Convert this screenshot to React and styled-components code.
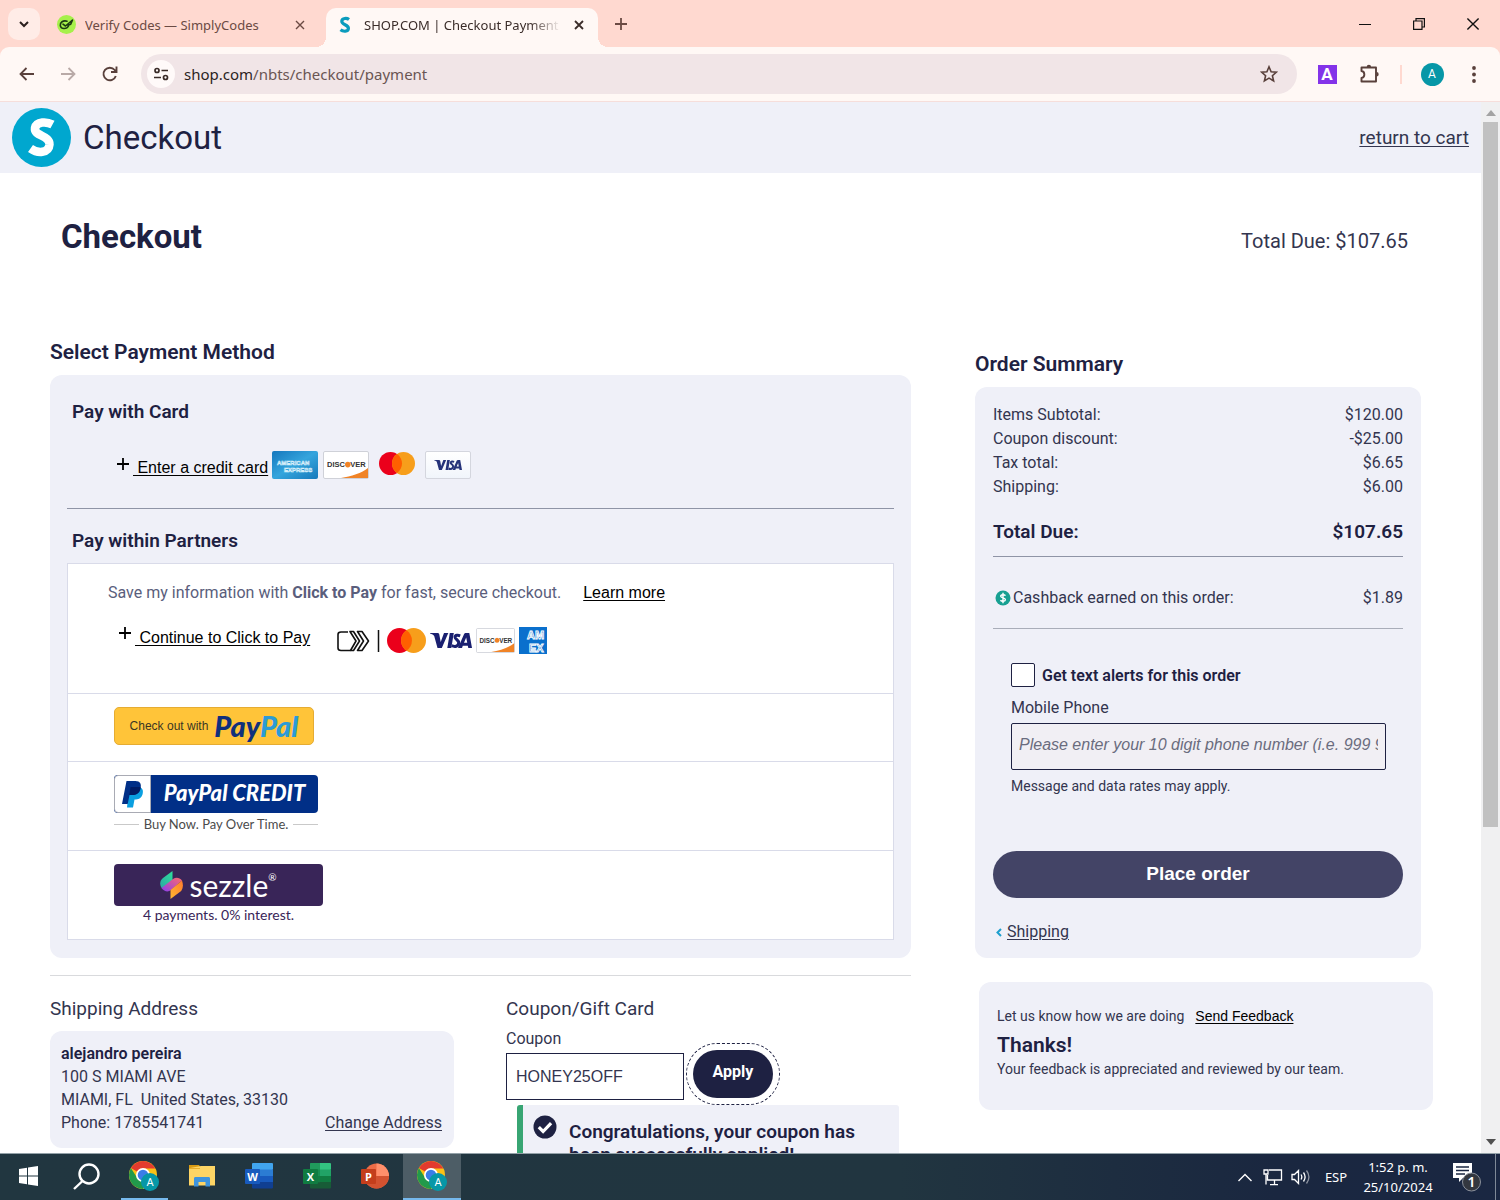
import React from "react";
import styled, { createGlobalStyle, css } from "styled-components";

const ink = "#1e2142";
const body = "#33354f";
const panel = "#eff0f8";
const roboto = `Roboto, "Liberation Sans", sans-serif`;
const arial = `"Liberation Sans", Arial, sans-serif`;
const system = `"Noto Sans", "Open Sans", sans-serif`;

const GlobalStyle = createGlobalStyle`
  *, *::before, *::after { box-sizing: border-box; }
  body { margin: 0; background: #fff; font-family: ${roboto}; color: ${body}; font-size: 16px; }
  h1, h2, h3, p { margin: 0; }
  button, input { font: inherit; color: inherit; }
  button { border: 0; padding: 0; background: none; cursor: pointer; }
  svg { display: block; flex: none; }
`;

const Desktop = styled.div`
  display: flex;
  flex-direction: column;
  height: 100vh;
  overflow: hidden;
`;

/* ---------- browser frame ---------- */

const TabStrip = styled.div`
  display: flex;
  flex: none;
  height: 47px;
  padding-left: 8px;
  background: #ffd9d0;
  font-family: ${system};
`;

const TabSearch = styled.button`
  display: grid;
  place-items: center;
  width: 32px;
  height: 32px;
  margin-top: 8px;
  border-radius: 10px;
  background: #ffece7;
`;

const Tab = styled.div`
  position: relative;
  display: flex;
  align-items: center;
  gap: 9px;
  width: 286px;
  height: 39px;
  margin-top: 8px;
  padding: 0 18px 6px 17px;
  color: #6b4a43;
  ${(p) =>
    p.$active &&
    css`
      gap: 10px;
      width: 272px;
      padding: 0 11px 6px 10px;
      color: #3a2c29;
      background: #fff8f5;
      border-radius: 10px 10px 0 0;
      &::before,
      &::after {
        content: "";
        position: absolute;
        bottom: 0;
        width: 10px;
        height: 10px;
      }
      &::before {
        left: -10px;
        background: radial-gradient(circle at 0 0, transparent 10px, #fff8f5 10px);
      }
      &::after {
        right: -10px;
        background: radial-gradient(circle at 100% 0, transparent 10px, #fff8f5 10px);
      }
    `}
`;

const TabTitle = styled.span`
  flex: 1;
  overflow: hidden;
  white-space: nowrap;
  font-size: 13px;
  ${(p) => p.$fade && "mask-image: linear-gradient(90deg, #000 84%, transparent);"}
`;

const TabClose = styled.button`
  display: grid;
  place-items: center;
  width: 16px;
  height: 16px;
`;

const NewTab = styled.button`
  display: grid;
  place-items: center;
  width: 46px;
  height: 47px;
`;

const WindowButtons = styled.div`
  display: flex;
  margin-left: auto;
`;

const WindowButton = styled.button`
  display: grid;
  place-items: center;
  width: 54px;
  height: 47px;
`;

const ToolbarBack = styled.div`
  flex: none;
  background: #ffd9d0;
`;

const Toolbar = styled.div`
  display: flex;
  align-items: center;
  height: 55px;
  padding: 0 5px;
  background: #fff8f5;
  border-bottom: 1px solid #f6dedb;
  border-radius: 9px 9px 0 0;
`;

const ToolButton = styled.button`
  display: grid;
  place-items: center;
  flex: none;
  width: 42px;
  height: 40px;
`;

const Omnibox = styled.div`
  display: flex;
  align-items: center;
  flex: 1;
  height: 40px;
  margin: 0 9px 0 10px;
  padding: 0 7px 0 6px;
  border-radius: 20px;
  background: #f1e5e7;
`;

const SiteInfo = styled.button`
  display: grid;
  place-items: center;
  width: 28px;
  height: 28px;
  border-radius: 50%;
  background: #fffaf9;
`;

const Address = styled.div`
  flex: 1;
  padding-left: 9px;
  font: 15px ${system};
  color: #6a5553;
  b {
    font-weight: 400;
    color: #2b1f1e;
  }
`;

const Divider = styled.span`
  width: 2px;
  height: 19px;
  margin: 0 9px 0 10px;
  background: #ffd9d0;
`;

const Avatar = styled.span`
  display: grid;
  place-items: center;
  width: 23px;
  height: 23px;
  border-radius: 50%;
  background: #0797a7;
  color: #fff;
  font-size: 12px;
`;

const ExtensionMark = styled.span`
  display: grid;
  place-items: center;
  width: 19px;
  height: 19px;
  background: #8333e9;
  color: #fff;
  font-size: 17px;
  font-weight: 700;
  line-height: 19px;
`;

/* ---------- page ---------- */

const Viewport = styled.div`
  display: flex;
  flex: 1;
  min-height: 0;
`;

const Page = styled.div`
  flex: 1;
  min-width: 0;
  overflow: hidden;
`;

const ScrollTrack = styled.div`
  display: flex;
  flex-direction: column;
  align-items: center;
  flex: none;
  width: 19px;
  padding: 8px 2px 8px;
  background: #f0f0f1;
`;

const ScrollThumb = styled.div`
  flex: 705 1 0;
  width: 100%;
  margin-top: 6px;
  background: #c1c1c1;
`;

const ScrollRest = styled.div`
  flex: 312 1 0;
`;

const SiteHeader = styled.header`
  display: flex;
  align-items: center;
  height: 71px;
  padding: 0 12px;
  gap: 12px;
  background: ${panel};
`;

const SiteTitle = styled.div`
  flex: 1;
  font-size: 33px;
  line-height: 40px;
  color: ${ink};
`;

const Link = styled.a`
  color: ${(p) => (p.$dark ? "#000" : body)};
  font-family: ${(p) => (p.$dark ? arial : roboto)};
  font-size: ${(p) => p.$size || 16}px;
  line-height: 22px;
  text-decoration: underline;
  text-underline-offset: 2px;
  white-space: pre;
`;

const Main = styled.main`
  padding: 44px 60px 0 50px;
`;

const TitleRow = styled.div`
  display: flex;
  align-items: baseline;
  justify-content: space-between;
  padding: 0 13px 0 11px;
  margin-bottom: 83px;
`;

const PageTitle = styled.h1`
  font-size: 33px;
  line-height: 40px;
  font-weight: 700;
  color: ${ink};
`;

const HeadTotal = styled.p`
  font-size: 20px;
  line-height: 24px;
`;

const Columns = styled.div`
  display: grid;
  grid-template-columns: 861fr 446fr;
  gap: 64px;
`;

const Side = styled.aside`
  padding-top: 12px;
`;

const SectionTitle = styled.h2`
  margin-bottom: 11px;
  font-size: 21px;
  line-height: 24px;
  font-weight: 600;
  color: ${ink};
`;

const Card = styled.section`
  padding: 26px 17px 18px;
  border-radius: 12px;
  background: ${panel};
`;

const GroupTitle = styled.h3`
  padding-left: 5px;
  font-size: 19px;
  line-height: 22px;
  font-weight: 600;
  color: ${ink};
`;

const Rule = styled.hr`
  height: 1px;
  margin: ${(p) => p.$margin};
  border: 0;
  background: ${(p) => (p.$light ? "#d9dadd" : "#8f94a6")};
`;

const CardRow = styled.div`
  display: flex;
  align-items: flex-end;
  height: 28px;
  margin-top: 28px;
  padding-left: 50px;
`;

const ClickRow = styled.div`
  display: flex;
  align-items: flex-start;
  margin-top: 23px;
  padding-left: 11px;
`;

const PlusSlot = styled.span`
  align-self: flex-start;
  padding-top: ${(p) => p.$top}px;
  margin-right: 4px;
`;

const Logos = styled.div`
  display: flex;
  align-items: center;
  align-self: center;
  gap: ${(p) => p.$gap}px;
  margin-left: ${(p) => p.$offset}px;
`;

const MastercardSlot = styled.span`
  padding: 0 5px 4px;
`;

const VisaTile = styled.span`
  display: grid;
  place-items: center;
  width: 46px;
  height: 28px;
  border: 1px solid #d4d6de;
  border-radius: 2px;
  background: linear-gradient(#fff, #f1f5fb);
`;

const Partners = styled.div`
  margin-top: 11px;
  border: 1px solid #d9dbe9;
  background: #fff;
`;

const Partner = styled.div`
  height: ${(p) => p.$height}px;
  padding: 13px 46px;
  border-top: 1px solid #d9dbe9;
`;

const ClickToPay = styled.div`
  height: 129px;
  padding: 18px 40px;
`;

const Pitch = styled.p`
  display: flex;
  gap: 22px;
  line-height: 22px;
  color: #5a5e7c;
`;

const PayPalButton = styled.button`
  display: flex;
  align-items: center;
  justify-content: center;
  gap: 6px;
  width: 200px;
  height: 38px;
  border: 1px solid #e5ac33;
  border-radius: 5px;
  background: #ffc439;
  color: #3a3524;
  font: 12px ${arial};
`;

const PayPalWord = styled.span`
  font: italic 900 29px/36px Lato, sans-serif;
  color: #10307c;
  i {
    color: #2b9bd6;
  }
`;

const CreditButton = styled.button`
  display: flex;
  width: 204px;
  height: 38px;
  overflow: hidden;
  border-radius: 4px;
  background: #012f87;
`;

const CreditMark = styled.span`
  display: grid;
  place-items: center;
  width: 37px;
  height: 38px;
  border: 1px solid #a9abb4;
  border-radius: 4px 0 0 4px;
  background: #fff;
`;

const CreditText = styled.span`
  flex: 1;
  font: italic 900 22px/36px Lato, sans-serif;
  color: #fff;
`;

const CreditCaption = styled.p`
  display: flex;
  align-items: center;
  gap: 5px;
  width: 204px;
  font: 13px/22px Lato, sans-serif;
  color: #4b4b4b;
  white-space: nowrap;
  &::before,
  &::after {
    content: "";
    flex: 1;
    height: 1px;
    background: #c9c9c9;
  }
`;

const SezzleButton = styled.button`
  display: flex;
  align-items: center;
  justify-content: center;
  gap: 6px;
  width: 209px;
  height: 42px;
  border-radius: 4px;
  background: #392558;
  color: #fff;
  font: 30px/36px Lato, sans-serif;
  sup {
    align-self: flex-start;
    font-size: 10px;
    line-height: 26px;
    margin-left: -6px;
  }
`;

const SezzleCaption = styled.p`
  width: 209px;
  text-align: center;
  font: 14px/18px Lato, sans-serif;
  color: #392558;
`;

const LowerGrid = styled.div`
  display: grid;
  grid-template-columns: 404fr 405fr;
  gap: 52px;
`;

const LowerTitle = styled.h2`
  font-size: 19px;
  line-height: 24px;
  font-weight: 400;
  color: ${body};
`;

const AddressCard = styled.div`
  display: flex;
  align-items: flex-end;
  justify-content: space-between;
  margin-top: 10px;
  padding: 11px 12px 14px 11px;
  border-radius: 12px;
  background: ${panel};
`;

const AddressLines = styled.address`
  font-style: normal;
  line-height: 23px;
  white-space: pre;
  color: ${body};
  strong {
    font-weight: 600;
    color: ${ink};
  }
`;

const FieldLabel = styled.label`
  display: block;
  margin-top: 6px;
  line-height: 23px;
`;

const CouponRow = styled.div`
  display: flex;
  align-items: flex-start;
  gap: 9px;
`;

const CouponInput = styled.input`
  width: 178px;
  height: 47px;
  margin-top: 3px;
  padding: 0 9px;
  border: 1px solid ${ink};
  background: #fff;
  font: 16px ${arial};
`;

const ApplyButton = styled.button`
  width: 80px;
  height: 48px;
  padding-bottom: 6px;
  border-radius: 24px;
  background: ${ink};
  color: #fff;
  font-size: 16px;
  font-weight: 700;
  outline: 1px dashed ${ink};
  outline-offset: 6px;
`;

const Alert = styled.div`
  display: flex;
  gap: 12px;
  margin: 5px 12px 0 11px;
  padding: 10px 10px 20px;
  border-left: 6px solid #38a573;
  border-radius: 3px;
  background: ${panel};
`;

const AlertText = styled.p`
  padding-top: 5px;
  font-size: 19px;
  line-height: 23px;
  font-weight: 600;
  color: ${ink};
`;

const SummaryCard = styled.section`
  padding: 16px 18px 13px;
  border-radius: 12px;
  background: ${panel};
`;

const Totals = styled.table`
  width: 100%;
  border-collapse: collapse;
  th,
  td {
    padding: 0;
    font-weight: 400;
    line-height: 24px;
    text-align: left;
  }
  td {
    text-align: right;
  }
`;

const GrandTotal = styled.tr`
  th,
  td {
    padding: 21px 0 12px;
    border-bottom: 1px solid #8f94a6;
    font-size: 19px;
    font-weight: 600;
    color: ${ink};
  }
`;

const Cashback = styled.tr`
  th,
  td {
    padding: 29px 0 18px;
    border-bottom: 1px solid #a9adb9;
  }
`;

const CashbackLabel = styled.span`
  display: flex;
  align-items: center;
  gap: 2px;
  padding-left: 2px;
`;

const Alerts = styled.form`
  padding: 34px 17px 0 18px;
`;

const CheckLine = styled.label`
  display: flex;
  align-items: center;
  gap: 7px;
  height: 24px;
  font-weight: 600;
  color: ${ink};
`;

const CheckBox = styled.input`
  appearance: none;
  width: 24px;
  height: 24px;
  margin: 0;
  border: 1px solid ${ink};
  border-radius: 2px;
  background: #fff;
`;

const PhoneLabel = styled.label`
  display: block;
  margin: 9px 0 3px;
  line-height: 24px;
`;

const PhoneInput = styled.input`
  width: 100%;
  height: 47px;
  padding: 0 7px 3px;
  border: 1px solid ${ink};
  border-radius: 2px;
  background: #f1eff4;
  font: 16px ${arial};
  &::placeholder {
    font-style: italic;
    color: #6a6c7e;
    opacity: 1;
  }
`;

const SmallText = styled.p`
  font-size: 14px;
  line-height: 20px;
`;

const MessageNote = styled(SmallText)`
  margin-top: 6px;
`;

const PlaceOrder = styled.button`
  display: block;
  width: 100%;
  height: 47px;
  margin: 55px 0 23px;
  padding-bottom: 2px;
  border-radius: 24px;
  background: #434466;
  color: #fff;
  font: 700 19px ${arial};
`;

const BackLine = styled.div`
  display: flex;
  align-items: center;
  gap: 5px;
  padding: 0 2px 2px;
`;

const Feedback = styled.section`
  height: 128px;
  margin: 24px -12px 0 4px;
  padding: 23px 18px;
  border-radius: 12px;
  background: ${panel};
`;

const FeedbackLine = styled.div`
  display: flex;
  gap: 11px;
  align-items: center;
`;

const Thanks = styled.h2`
  margin: 6px 0 2px;
  font-size: 21px;
  line-height: 24px;
  font-weight: 600;
  color: ${ink};
`;

/* ---------- taskbar ---------- */

const Taskbar = styled.footer`
  display: flex;
  align-items: stretch;
  justify-content: space-between;
  flex: none;
  height: 47px;
  border-top: 1px solid #93a1a8;
  background: linear-gradient(90deg, #213640 0%, #213540 60%, #1a2740 85%, #1a2742 100%);
  color: #fff;
  font-family: ${system};
`;

const Apps = styled.div`
  display: grid;
  grid-template-columns: repeat(8, 1fr);
  width: 461px;
`;

const AppButton = styled.button`
  display: grid;
  place-items: center;
  padding-bottom: 2px;
  ${(p) =>
    p.$current &&
    css`
      padding-bottom: 0;
      background: #4d5d66;
      border-bottom: 2px solid #76b9ed;
    `}
  ${(p) =>
    p.$open &&
    css`
      background: linear-gradient(#76b9ed, #76b9ed) center bottom / 47px 2px no-repeat;
    `}
`;

const Tray = styled.div`
  display: flex;
  align-items: center;
`;

const TrayButton = styled.button`
  display: grid;
  place-items: center;
  width: ${(p) => p.$width}px;
  height: 46px;
  color: #fff;
  font-size: 13px;
  line-height: 20px;
  text-align: center;
`;

const ShowDesktop = styled.button`
  width: 5px;
  height: 46px;
  border-left: 1px solid #7f8997;
`;

/* ---------- drawings ---------- */

const Cross = ({ size = 10, color = "#3a2c29", width = 1.8 }) => (
  <svg width={size} height={size} viewBox="0 0 10 10" stroke={color} strokeWidth={width}>
    <path d="M1 1l8 8M9 1L1 9" />
  </svg>
);

const Plus = ({ size = 12, color = "#000", width = 1.8 }) => (
  <svg width={size} height={size} viewBox="0 0 12 12" stroke={color} strokeWidth={width}>
    <path d="M6 0v12M0 6h12" />
  </svg>
);

const ShopLogo = () => (
  <svg width="59" height="59" viewBox="0 0 59 59">
    <circle cx="29.500" cy="29.500" r="29.500" fill="#00a7cf" />
    <path
      d="M40.500 16.500C35 13.500 24.500 13 23 20C21.800 28.500 38 27 37.500 36.500C36.800 45.500 25.500 45.500 18.500 40.500"
      fill="none"
      stroke="#fff"
      strokeWidth="8.500"
    />
  </svg>
);

const ShopFavicon = () => (
  <svg width="18" height="18" viewBox="0 0 18 18">
    <path d="M13 3.500C11 2 6 1.800 5.800 5.200C5.600 9 12.400 8.500 12.400 12.300C12.400 16 7 15.800 4.500 13.800" fill="none" stroke="#0b9cbd" strokeWidth="3.200" />
  </svg>
);

const SimplyFavicon = () => (
  <svg width="19" height="19" viewBox="0 0 19 19">
    <circle cx="9.500" cy="9.500" r="9.500" fill="#a6f04a" />
    <g fill="none" stroke="#1d3b12" strokeWidth="1.600" strokeLinecap="round" strokeLinejoin="round">
      <path d="M10 6.200C6 5 3 7.500 3.300 10.500c.4 3.800 6.500 4 8.200.5" />
      <path d="M6 9.200l2.500 1.800L15.500 5l-1.800 4.200-2.700 1" />
    </g>
  </svg>
);

const AmexCard = () => (
  <svg width="46" height="28" viewBox="0 0 46 28" role="img" aria-label="American Express">
    <defs>
      <linearGradient id="amexBlue" x1="0" y1="0" x2="1" y2="1">
        <stop offset="0" stopColor="#1577bd" />
        <stop offset=".5" stopColor="#35a5dd" />
        <stop offset="1" stopColor="#1679bb" />
      </linearGradient>
    </defs>
    <rect width="46" height="28" rx="2" fill="url(#amexBlue)" />
    <g fill="#2d8fce" stroke="#d6effa" strokeWidth=".6" fontFamily="Liberation Sans" fontWeight="700" fontSize="6">
      <text x="5" y="13.500">AMERICAN</text>
      <text x="12" y="20.500">EXPRESS</text>
    </g>
  </svg>
);

const DiscoverCard = ({ width = 46, height = 28 }) => (
  <svg width={width} height={height} viewBox="0 0 46 28" preserveAspectRatio="none" role="img" aria-label="Discover">
    <rect x=".5" y=".5" width="45" height="27" rx="1.500" fill="#fff" stroke="#cfd1d8" />
    <path d="M18 27C28 25.500 39 22 45 17v10z" fill="#f08326" />
    <g fontFamily="Liberation Sans" fontWeight="700" fontSize="7.500" fill="#333">
      <text x="4" y="16.300">DISC</text>
      <text x="27.300" y="16.300">VER</text>
    </g>
    <circle cx="24.800" cy="13.600" r="2.800" fill="#f08326" />
  </svg>
);

const Mastercard = ({ width = 36, height = 23 }) => (
  <svg width={width} height={height} viewBox="0 0 36 23" preserveAspectRatio="none" role="img" aria-label="Mastercard">
    <circle cx="11.500" cy="11.500" r="11.500" fill="#eb001b" />
    <circle cx="24.500" cy="11.500" r="11.500" fill="#f79e1b" />
    <path d="M18 2a11.500 11.500 0 0 1 0 19a11.500 11.500 0 0 1 0-19z" fill="#ff5f00" />
  </svg>
);

const VisaWord = ({ width, height, color }) => (
  <svg width={width} height={height} viewBox="0 0 42 17" role="img" aria-label="Visa">
    <g fill={color}>
      <path d="M0 1h7.500c1 0 1.600.5 1.800 1.500L10.700 10 14 1h4.300l-6.500 15H7.500L4.200 4C3.600 2.800 2 2 0 1.500z" />
      <path d="M19.800 1h4l-2.500 15h-4z" />
      <path d="M36 1h3.300L42 16h-3.700l-.5-2.300h-5L32 16h-4L34 2.200C34.400 1.300 35 1 36 1zm.2 4.500L34 10.800h3.200z" />
    </g>
    <path d="M30.800 3.300c-2-.8-5-.9-5.200 1.300-.1 2.300 4 2.700 3.700 5.900-.3 3.600-4 4-7 2.700" transform="translate(-.6 .5)" fill="none" stroke={color} strokeWidth="3" />
  </svg>
);

const ClickIcon = () => (
  <svg width="33" height="22" viewBox="0 0 33 22" fill="none" stroke="#111" strokeWidth="1.600" strokeLinejoin="round">
    <path d="M11 2H4C2.500 2 1 3 1 4.500v13.500c0 1.500 1.500 2.500 3 2.500h9.500" />
    <path d="M13 1.500h3.500l6 9.500-6 9.500h-3l5.500-9.500z" />
    <path d="M20.500 1.500H25L31.500 11 25 20.500h-4.500l6-9.500z" />
  </svg>
);

const AmexSquare = () => (
  <svg width="28" height="27" viewBox="0 0 28 27" role="img" aria-label="Amex">
    <rect width="28" height="27" fill="#0a70cd" />
    <g fill="#0a70cd" stroke="#fff" strokeWidth=".9" fontFamily="Liberation Sans" fontWeight="700" fontSize="11">
      <text x="8" y="12">AM</text>
      <text x="10" y="25">EX</text>
    </g>
  </svg>
);

const PayPalMark = () => (
  <svg width="22" height="27" viewBox="0 0 22 27">
    <path d="M7 6h10c4 1 4.500 4 3.500 7.500-1.300 4-4 5-8 5l-1.500 8H5z" fill="#0a9fe0" />
    <path d="M4.500 0h8.800c5 0 6.300 3 5.300 7.500-1 4.800-4 6.500-8.800 6.500H7.500L5.700 23H0z" fill="#012f87" />
    <path d="M8.500 6h10c-.3 5.500-3.600 8-8.700 8H7.400z" fill="#011c64" />
  </svg>
);

const SezzleMark = () => (
  <svg width="23" height="28" viewBox="0 0 23 28">
    <defs>
      <linearGradient id="sezzleGreen" x1="1" y1="0" x2="0" y2="1">
        <stop offset="0" stopColor="#2fe09b" />
        <stop offset="1" stopColor="#2aa7a4" />
      </linearGradient>
      <linearGradient id="sezzlePink" x1="0" y1="1" x2="1" y2="0">
        <stop offset="0" stopColor="#8a3df0" />
        <stop offset="1" stopColor="#ff6a6a" />
      </linearGradient>
      <linearGradient id="sezzleGold" x1="0" y1="1" x2="1" y2="0">
        <stop offset="0" stopColor="#ffb930" />
        <stop offset="1" stopColor="#ff7a2e" />
      </linearGradient>
    </defs>
    <path d="M12.500 0v9L2 17.500C-.8 14 -.3 9.500 3 7z" fill="url(#sezzleGreen)" />
    <path d="M1.500 17L13 8c3-2 6.500-1.500 9 1.500L11 19c-3 2.500-6.800 1.500-9.500-2z" fill="url(#sezzlePink)" />
    <path d="M10.500 28v-9L22 9.500c1.500 4 1.200 8.500-1.500 11z" fill="url(#sezzleGold)" />
  </svg>
);

const Chrome = () => (
  <svg width="32" height="32" viewBox="0 0 32 32">
    <circle cx="15" cy="15" r="14" fill="#fbc116" />
    <path d="M15 15L2.880 8a14 14 0 0 1 24.240 0L27 8.500H15z" fill="#e33b2e" />
    <path d="M15 29A14 14 0 0 1 2.880 8L9.400 18.300 15 21.500h4z" fill="#229a4b" />
    <circle cx="15" cy="15" r="7" fill="#fff" />
    <circle cx="15" cy="15" r="5.300" fill="#3b7de8" />
    <circle cx="22" cy="22" r="9" fill="#0797a7" />
    <text x="22" y="26" textAnchor="middle" fontFamily="Roboto" fontSize="11" fill="#fff">A</text>
  </svg>
);

const Folder = () => (
  <svg width="26" height="22" viewBox="0 0 26 22">
    <path d="M0 0h10l2 3H0z" fill="#d89b14" />
    <path d="M1 3l11-2h14v19.500H0V3z" fill="#fdd565" />
    <path d="M0 3h11v1H0z" fill="#e9ae2b" />
    <path d="M5 21.500V13.500c0-1 .6-1.500 1.500-1.500h13c1 0 1.500.6 1.500 1.500v8h-4.500V17h-7v4.500z" fill="#3e94dd" />
  </svg>
);

const OfficeApp = ({ letter, tones, round }) => (
  <svg width="28" height="26" viewBox="0 0 28 26">
    {round ? (
      <g>
        <circle cx="15.500" cy="13" r="12.500" fill={tones[0]} />
        <path d="M15.500 .5A12.500 12.500 0 0 1 28 13H15.500z" fill={tones[1]} />
        <path d="M3 13h25a12.500 12.500 0 0 1-25 0z" fill={tones[2]} />
      </g>
    ) : (
      <g>
        <rect x="7" y="0" width="21" height="7" rx="1" fill={tones[0]} />
        <rect x="7" y="6.500" width="21" height="6.500" fill={tones[1]} />
        <rect x="7" y="13" width="21" height="6.500" fill={tones[2]} />
        <rect x="7" y="19" width="21" height="6.500" rx="1" fill={tones[3]} />
        {letter === "X" && <path d="M7 0h10v19.500H7z" fill="#148044" opacity=".6" />}
      </g>
    )}
    <rect x="0" y="6" width="15" height="15" rx="1" fill={tones[4]} />
    <text x="7.500" y="17.500" textAnchor="middle" fontFamily="Open Sans" fontWeight="700" fontSize="11" fill="#fff">{letter}</text>
  </svg>
);

/* ---------- content ---------- */

const charges = [
  ["Items Subtotal:", "$120.00"],
  ["Coupon discount:", "-$25.00"],
  ["Tax total:", "$6.65"],
  ["Shipping:", "$6.00"],
];

function BrowserFrame() {
  return (
    <>
      <TabStrip>
        <TabSearch aria-label="Search tabs">
          <svg width="10" height="7" viewBox="0 0 10 7" fill="none" stroke="#2b1f1e" strokeWidth="2"><path d="M1 1l4 4 4-4" /></svg>
        </TabSearch>
        <Tab>
          <SimplyFavicon />
          <TabTitle>Verify Codes — SimplyCodes</TabTitle>
          <TabClose aria-label="Close tab"><Cross color="#6b4a43" width={1.4} /></TabClose>
        </Tab>
        <Tab $active>
          <ShopFavicon />
          <TabTitle $fade>SHOP.COM | Checkout Payment</TabTitle>
          <TabClose aria-label="Close tab"><Cross /></TabClose>
        </Tab>
        <NewTab aria-label="New tab"><Plus color="#6b4a43" /></NewTab>
        <WindowButtons>
          <WindowButton aria-label="Minimize"><svg width="12" height="12" stroke="#111"><path d="M0 6.500h12" /></svg></WindowButton>
          <WindowButton aria-label="Restore">
            <svg width="12" height="12" viewBox="0 0 12 12" fill="none" stroke="#111" strokeWidth="1.200"><path d="M.6 3h8.400v8.400H.6zM3 3V.6h8.400V9H9" /></svg>
          </WindowButton>
          <WindowButton aria-label="Close"><Cross size={14} color="#111" width={1} /></WindowButton>
        </WindowButtons>
      </TabStrip>
      <ToolbarBack>
        <Toolbar>
          <ToolButton aria-label="Back">
            <svg width="15" height="14" viewBox="0 0 15 14" fill="none" stroke="#59403b" strokeWidth="1.800"><path d="M15 7H1.500M7.500 1l-6 6 6 6" /></svg>
          </ToolButton>
          <ToolButton aria-label="Forward">
            <svg width="15" height="14" viewBox="0 0 15 14" fill="none" stroke="#b9aaa7" strokeWidth="1.800"><path d="M0 7h13.500M7.500 1l6 6-6 6" /></svg>
          </ToolButton>
          <ToolButton aria-label="Reload">
            <svg width="16" height="16" viewBox="0 0 16 16" fill="none" stroke="#59403b" strokeWidth="1.900"><path d="M13.800 10A6.300 6.300 0 1 1 12.700 4L14 6M14.500 .5V6H9" /></svg>
          </ToolButton>
          <Omnibox>
            <SiteInfo aria-label="Site information">
              <svg width="15" height="14" viewBox="0 0 15 14" fill="none" stroke="#3a2c29" strokeWidth="1.700"><circle cx="3" cy="3.500" r="2" /><path d="M7.500 3.500H14M0 10.500h7" /><circle cx="11.500" cy="10.500" r="2" /></svg>
            </SiteInfo>
            <Address><b>shop.com</b>/nbts/checkout/payment</Address>
            <ToolButton aria-label="Bookmark this tab">
              <svg width="18" height="18" viewBox="0 0 18 18" fill="none" stroke="#59403b" strokeWidth="1.600"><path d="M9 1.800l2.100 4.900 5.300.5-4 3.500 1.200 5.200L9 13.100l-4.600 2.800 1.200-5.200-4-3.500 5.300-.5z" /></svg>
            </ToolButton>
          </Omnibox>
          <ToolButton aria-label="Extension"><ExtensionMark>A</ExtensionMark></ToolButton>
          <ToolButton aria-label="Extensions">
            <svg width="20" height="20" viewBox="0 0 20 20" fill="none" stroke="#59403b" strokeWidth="1.900" strokeLinejoin="round">
              <path d="M2.500 3.500H17v14H2.500V14c3.800-.5 3.800-6.500 0-7z" /><path d="M7.700 3a2.200 2.200 0 0 1 4.400 0zM17.500 8a2.200 2.200 0 0 1 0 4.400z" fill="#59403b" stroke="none" />
            </svg>
          </ToolButton>
          <Divider />
          <ToolButton aria-label="Profile"><Avatar>A</Avatar></ToolButton>
          <ToolButton aria-label="Menu">
            <svg width="4" height="17" viewBox="0 0 4 17" fill="#59403b"><circle cx="2" cy="2" r="1.900" /><circle cx="2" cy="8.500" r="1.900" /><circle cx="2" cy="15" r="1.900" /></svg>
          </ToolButton>
        </Toolbar>
      </ToolbarBack>
    </>
  );
}

function PaymentMethods() {
  return (
    <>
      <SectionTitle>Select Payment Method</SectionTitle>
      <Card>
        <GroupTitle>Pay with Card</GroupTitle>
        <CardRow>
          <PlusSlot $top={7}><Plus /></PlusSlot>
          <Link href="#card" $dark>{" Enter a credit card"}</Link>
          <Logos $gap={5} $offset={4}>
            <AmexCard />
            <DiscoverCard />
            <MastercardSlot><Mastercard /></MastercardSlot>
            <VisaTile><VisaWord width={28} height={12} color="#26337a" /></VisaTile>
          </Logos>
        </CardRow>
        <Rule $margin="29px 0 21px" />
        <GroupTitle>Pay within Partners</GroupTitle>
        <Partners>
          <ClickToPay>
            <Pitch>
              <span>Save my information with <strong>Click to Pay</strong> for fast, secure checkout.</span>
              <Link href="#learn" $dark>Learn more</Link>
            </Pitch>
            <ClickRow>
              <PlusSlot $top={0}><Plus /></PlusSlot>
              <Link href="#click-to-pay" $dark>{" Continue to Click to Pay"}</Link>
              <Logos $gap={4} $offset={27}>
                <ClickIcon />
                <svg width="9" height="22"><path d="M4.500 0v22" stroke="#111" strokeWidth="1.500" /></svg>
                <Mastercard width={39} height={25} />
                <VisaWord width={42} height={17} color="#1a2070" />
                <DiscoverCard width={39} height={25} />
                <AmexSquare />
              </Logos>
            </ClickRow>
          </ClickToPay>
          <Partner $height={68}>
            <PayPalButton>
              Check out with
              <PayPalWord>Pay<i>Pal</i></PayPalWord>
            </PayPalButton>
          </Partner>
          <Partner $height={89}>
            <CreditButton>
              <CreditMark><PayPalMark /></CreditMark>
              <CreditText>PayPal CREDIT</CreditText>
            </CreditButton>
            <CreditCaption>Buy Now. Pay Over Time.</CreditCaption>
          </Partner>
          <Partner $height={89}>
            <SezzleButton><SezzleMark />sezzle<sup>®</sup></SezzleButton>
            <SezzleCaption>4 payments. 0% interest.</SezzleCaption>
          </Partner>
        </Partners>
      </Card>
    </>
  );
}

function Lower() {
  return (
    <>
      <Rule $light $margin="17px 0 21px" />
      <LowerGrid>
        <section>
          <LowerTitle>Shipping Address</LowerTitle>
          <AddressCard>
            <AddressLines>
              <strong>alejandro pereira</strong>
              {"\n100 S MIAMI AVE\nMIAMI, FL  United States, 33130\nPhone: 1785541741"}
            </AddressLines>
            <Link href="#address">Change Address</Link>
          </AddressCard>
        </section>
        <section>
          <LowerTitle>Coupon/Gift Card</LowerTitle>
          <FieldLabel htmlFor="coupon">Coupon</FieldLabel>
          <CouponRow>
            <CouponInput id="coupon" defaultValue="HONEY25OFF" />
            <ApplyButton>Apply</ApplyButton>
          </CouponRow>
          <Alert role="status">
            <svg width="24" height="24" viewBox="0 0 24 24">
              <circle cx="12" cy="12" r="11.500" fill={ink} />
              <path d="M5.800 12.200l4.300 4.300 8-8.300" fill="none" stroke="#fff" strokeWidth="3.200" />
            </svg>
            <AlertText>Congratulations, your coupon has been successfully applied!</AlertText>
          </Alert>
        </section>
      </LowerGrid>
    </>
  );
}

function Summary() {
  return (
    <Side>
      <SectionTitle>Order Summary</SectionTitle>
      <SummaryCard>
        <Totals>
          <tbody>
            {charges.map(([name, amount]) => (
              <tr key={name}><th scope="row">{name}</th><td>{amount}</td></tr>
            ))}
            <GrandTotal><th scope="row">Total Due:</th><td>$107.65</td></GrandTotal>
            <Cashback>
              <th scope="row">
                <CashbackLabel>
                  <svg width="16" height="16" viewBox="0 0 16 16">
                    <circle cx="8" cy="8" r="7.500" fill="#17a092" />
                    <path d="M10.500 5.600C9.500 4.300 5.600 4.300 5.700 6.300c.1 2 4.700 1.300 4.700 3.500 0 2-3.800 2-5 .5M8 2.800v10.400" fill="none" stroke="#fff" strokeWidth="1.400" />
                  </svg>
                  Cashback earned on this order:
                </CashbackLabel>
              </th>
              <td>$1.89</td>
            </Cashback>
          </tbody>
        </Totals>
        <Alerts>
          <CheckLine><CheckBox type="checkbox" />Get text alerts for this order</CheckLine>
          <PhoneLabel htmlFor="phone">Mobile Phone</PhoneLabel>
          <PhoneInput id="phone" type="tel" placeholder="Please enter your 10 digit phone number (i.e. 999 999 9999)" />
          <MessageNote>Message and data rates may apply.</MessageNote>
        </Alerts>
        <PlaceOrder>Place order</PlaceOrder>
        <BackLine>
          <svg width="7" height="9" viewBox="0 0 7 9" fill="none" stroke="#1d9fce" strokeWidth="2"><path d="M6 1L2.500 4.500 6 8" /></svg>
          <Link href="#shipping">Shipping</Link>
        </BackLine>
      </SummaryCard>
      <Feedback>
        <FeedbackLine>
          <SmallText as="span">Let us know how we are doing</SmallText>
          <Link href="#feedback" $dark $size={14}>Send Feedback</Link>
        </FeedbackLine>
        <Thanks>Thanks!</Thanks>
        <SmallText>Your feedback is appreciated and reviewed by our team.</SmallText>
      </Feedback>
    </Side>
  );
}

function WindowsTaskbar() {
  return (
    <Taskbar>
      <Apps>
        <AppButton aria-label="Start">
          <svg width="19" height="20" viewBox="0 0 19 20" fill="#fff"><path d="M0 3l8-1.200v7.700H0zM9 1.600L19 0v9.500H9zM0 10.500h8v7.700L0 17zM9 10.500h10V20L9 18.400z" /></svg>
        </AppButton>
        <AppButton aria-label="Search">
          <svg width="27" height="27" viewBox="0 0 27 27" fill="none" stroke="#fff" strokeWidth="2.400"><circle cx="16" cy="11" r="9.500" /><path d="M9.500 18L1 26" /></svg>
        </AppButton>
        <AppButton $open aria-label="Google Chrome"><Chrome /></AppButton>
        <AppButton aria-label="File Explorer"><Folder /></AppButton>
        <AppButton aria-label="Word"><OfficeApp letter="W" tones={["#41a5ee", "#2b7cd3", "#185abd", "#103f91", "#185abd"]} /></AppButton>
        <AppButton aria-label="Excel"><OfficeApp letter="X" tones={["#33c481", "#21a366", "#107c41", "#185c37", "#107c41"]} /></AppButton>
        <AppButton aria-label="PowerPoint"><OfficeApp letter="P" round tones={["#ed6c47", "#ff8f6b", "#d35230", "", "#c43e1c"]} /></AppButton>
        <AppButton $current aria-label="Google Chrome"><Chrome /></AppButton>
      </Apps>
      <Tray>
        <TrayButton $width={28} aria-label="Show hidden icons">
          <svg width="14" height="9" viewBox="0 0 14 9" fill="none" stroke="#fff" strokeWidth="1.400"><path d="M.5 8L7 1.500 13.500 8" /></svg>
        </TrayButton>
        <TrayButton $width={28} aria-label="Network">
          <svg width="20" height="17" viewBox="0 0 20 17" fill="none" stroke="#fff" strokeWidth="1.300"><path d="M6 1h12.500v10H4.500V6M11.500 11v4.500M7 15.700h8M1 1h4v4H1zM3 5v10.500" /></svg>
        </TrayButton>
        <TrayButton $width={28} aria-label="Volume">
          <svg width="20" height="16" viewBox="0 0 20 16" fill="none" stroke="#fff" strokeWidth="1.300"><path d="M1 5.500h2.500L7.500 1.500v13l-4-4H1zM10 5.500c1 1.500 1 3.500 0 5M12.500 3.500c2 2.800 2 6.200 0 9" /><path d="M15.500 1.500c3 4 3 9 0 13" opacity=".5" /></svg>
        </TrayButton>
        <TrayButton $width={42}>ESP</TrayButton>
        <TrayButton $width={82}><span>1:52 p. m.<br />25/10/2024</span></TrayButton>
        <TrayButton $width={56} aria-label="Notifications">
          <svg width="28" height="30" viewBox="0 0 28 30">
            <path d="M0 1h19v15h-9l-4 4v-4H0z" fill="#fff" />
            <path d="M3 5h13M3 8.500h13M3 12h9" stroke="#1a2742" strokeWidth="1.300" />
            <circle cx="18.500" cy="20" r="9" fill="#33373f" stroke="#8b919b" />
            <text x="18.500" y="25" textAnchor="middle" fontFamily="Noto Sans" fontWeight="600" fontSize="14" fill="#fff">1</text>
          </svg>
        </TrayButton>
        <ShowDesktop aria-label="Show desktop" />
      </Tray>
    </Taskbar>
  );
}

export default function App() {
  return (
    <Desktop>
      <GlobalStyle />
      <BrowserFrame />
      <Viewport>
        <Page>
          <SiteHeader>
            <ShopLogo />
            <SiteTitle>Checkout</SiteTitle>
            <Link href="#cart" $size={19}>return to cart</Link>
          </SiteHeader>
          <Main>
            <TitleRow>
              <PageTitle>Checkout</PageTitle>
              <HeadTotal>Total Due: $107.65</HeadTotal>
            </TitleRow>
            <Columns>
              <div>
                <PaymentMethods />
                <Lower />
              </div>
              <Summary />
            </Columns>
          </Main>
        </Page>
        <ScrollTrack>
          <svg width="10" height="6" viewBox="0 0 10 6" fill="#a3a3a3"><path d="M5 0l5 6H0z" /></svg>
          <ScrollThumb />
          <ScrollRest />
          <svg width="10" height="6" viewBox="0 0 10 6" fill="#505050"><path d="M0 0h10L5 6z" /></svg>
        </ScrollTrack>
      </Viewport>
      <WindowsTaskbar />
    </Desktop>
  );
}
